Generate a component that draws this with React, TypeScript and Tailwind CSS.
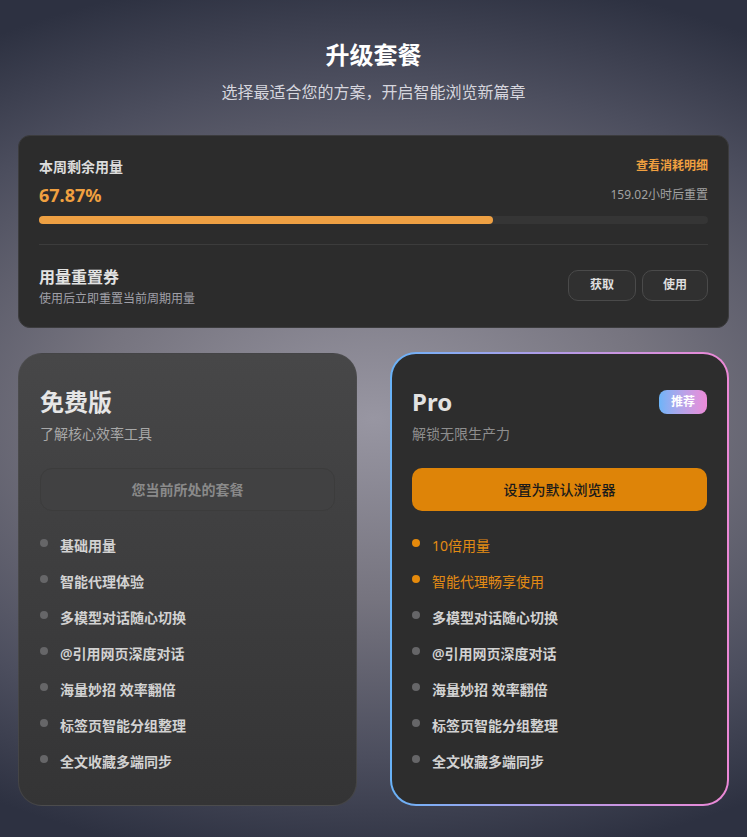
const font = 'font-["Noto_Sans","Noto_Sans_CJK_SC",sans-serif]';

type Feature = { label: string; highlight?: boolean };

const freeFeatures: Feature[] = [
  { label: '基础用量' },
  { label: '智能代理体验' },
  { label: '多模型对话随心切换' },
  { label: '@引用网页深度对话' },
  { label: '海量妙招 效率翻倍' },
  { label: '标签页智能分组整理' },
  { label: '全文收藏多端同步' },
];

const proFeatures: Feature[] = [
  { label: '10倍用量', highlight: true },
  { label: '智能代理畅享使用', highlight: true },
  { label: '多模型对话随心切换' },
  { label: '@引用网页深度对话' },
  { label: '海量妙招 效率翻倍' },
  { label: '标签页智能分组整理' },
  { label: '全文收藏多端同步' },
];

const usage = 67.87;

const FeatureList = ({ items }: { items: Feature[] }) => (
  <ul className="flex flex-col gap-4 mt-[25px]">
    {items.map((item) => (
      <li key={item.label} className="flex items-start gap-3">
        <span
          className={`mt-[3px] h-[8px] w-[8px] rounded-full shrink-0 ${
            item.highlight ? 'bg-[#e58a0c]' : 'bg-[#666668]'
          }`}
        />
        {item.highlight ? (
          <span className="text-[14px] leading-5 font-normal text-[#e38b14]">{item.label}</span>
        ) : (
          <span className="text-[14px] leading-5 font-semibold text-[#d2d2d2]">{item.label}</span>
        )}
      </li>
    ))}
  </ul>
);

const App = () => {
  return (
    <div
      className={`${font} h-[837px] w-full overflow-hidden bg-[radial-gradient(ellipse_720px_450px_at_50%_50%,#9896a2_0%,#76747f_40%,#4c4e5e_75%,#2d3141_100%)] px-[18px] pt-[39px]`}
    >
      <div className="flex flex-col items-center">
        <h1 className="text-[24px] leading-8 font-bold text-white">升级套餐</h1>
        <p className="mt-[10px] text-[16px] leading-[22px] text-[#d6d6de]">
          选择最适合您的方案，开启智能浏览新篇章
        </p>
      </div>

      {/* usage summary */}
      <div className="mt-[32px] rounded-[12px] border border-[#3c3c3e] bg-[#2c2c2c] px-5 pt-[21px] pb-[20px]">
        <div className="flex items-center justify-between h-[18px]">
          <span className="text-[14px] font-semibold text-[#dcdcdc]">本周剩余用量</span>
          <span className="text-[12px] font-bold text-[#f0a040]">查看消耗明细</span>
        </div>
        <div className="mt-[8px] flex items-center justify-between h-[24px]">
          <span className="text-[18px] font-bold text-[#f0a040]">{usage}%</span>
          <span className="text-[12px] text-[#a2a2a2]">159.02小时后重置</span>
        </div>
        <div className="mt-[9px] h-[8px] w-full rounded-full bg-[#353535]">
          <div className="h-full rounded-full bg-[#eea043]" style={{ width: `${usage}%` }} />
        </div>
        <div className="mt-[20px] h-px bg-[#3c3c3c]" />
        <div className="mt-[21px] flex items-center justify-between">
          <div className="flex flex-col">
            <span className="text-[16px] leading-[22px] font-bold text-[#e2e2e2]">用量重置券</span>
            <span className="mt-[3px] text-[12px] leading-4 text-[#a0a0a8]">
              使用后立即重置当前周期用量
            </span>
          </div>
          <div className="flex gap-[6px] -mt-[3px]">
            <button className="h-[31px] w-[68px] rounded-[10px] border border-[#4a4a4a] bg-[#303030] text-[12px] font-bold text-[#dedede]">
              获取
            </button>
            <button className="h-[31px] w-[66px] rounded-[10px] border border-[#4a4a4a] bg-[#303030] text-[12px] font-bold text-[#dedede]">
              使用
            </button>
          </div>
        </div>
      </div>

      <div className="mt-[24px] grid grid-cols-2 gap-[33px] items-start">
        {/* free plan */}
        <div className="mt-px rounded-[24px] border border-[#505052]/60 bg-gradient-to-b from-[#474748] to-[#343435] px-[21px] pt-[32px] pb-[33px]">
          <h2 className="text-[24px] leading-8 font-bold text-[#e6e6e6]">免费版</h2>
          <p className="mt-[6px] text-[14px] leading-5 text-[#a8a8a8]">了解核心效率工具</p>
          <div className="mt-[24px] flex h-[43px] items-center justify-center rounded-[12px] border border-[#3c3c3c] bg-[#414142] text-[14px] font-bold text-[#8a8a8a]">
            您当前所处的套餐
          </div>
          <FeatureList items={freeFeatures} />
        </div>

        {/* pro plan */}
        <div className="rounded-[26px] bg-gradient-to-r from-[#68b2f8] via-[#b49ae6] to-[#ec88d6] p-[2px]">
          <div className="rounded-[24px] bg-[#2d2d2d] px-5 pt-[32px] pb-[32px]">
            <div className="flex items-center justify-between h-8">
              <h2 className="text-[24px] leading-8 font-bold text-[#e2e2e2]">Pro</h2>
              <span className="flex h-[24px] w-[48px] items-center justify-center rounded-[8px] bg-gradient-to-r from-[#6cb4f8] to-[#ec8ad8] text-[12px] font-bold text-white">
                推荐
              </span>
            </div>
            <p className="mt-[6px] text-[14px] leading-5 text-[#8e8e8e]">解锁无限生产力</p>
            <button className="mt-[24px] flex h-[43px] w-full items-center justify-center rounded-[10px] bg-[#de8408] text-[14px] font-medium text-[#1a1a1a]">
              设置为默认浏览器
            </button>
            <FeatureList items={proFeatures} />
          </div>
        </div>
      </div>
    </div>
  );
};

export default App;
